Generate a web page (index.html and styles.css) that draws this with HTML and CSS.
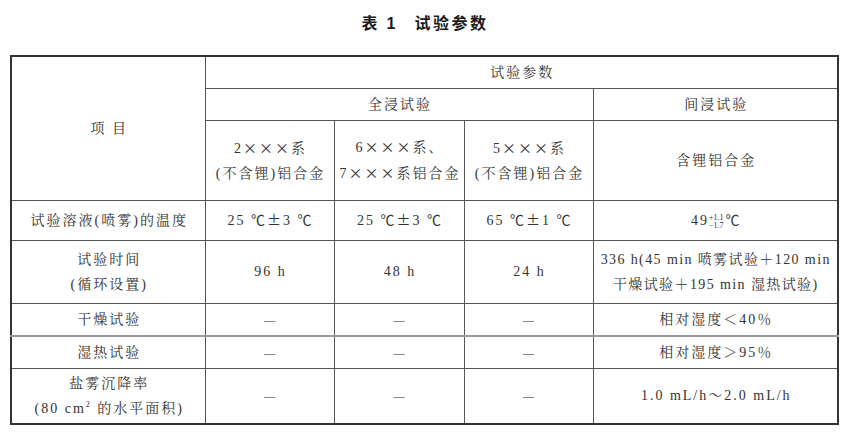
FILE: index.html
```html
<!DOCTYPE html>
<html lang="zh-CN">
<head>
<meta charset="utf-8">
<title>表 1 试验参数</title>
<link rel="stylesheet" href="styles.css">
</head>
<body>
<div class="title"><span>表</span><span class="num">1</span><span class="name">试验参数</span></div>
<table class="params">
  <colgroup>
    <col class="c1"><col class="c2"><col class="c3"><col class="c4"><col class="c5">
  </colgroup>
  <tr class="r1">
    <td rowspan="3">项 目</td>
    <td colspan="4">试验参数</td>
  </tr>
  <tr class="r2">
    <td colspan="3">全浸试验</td>
    <td>间浸试验</td>
  </tr>
  <tr class="r3">
    <td>2<span class="u">×</span><span class="u">×</span><span class="u">×</span>系<br>(不含锂)铝合金</td>
    <td>6<span class="u">×</span><span class="u">×</span><span class="u">×</span>系、<br>7<span class="u">×</span><span class="u">×</span><span class="u">×</span>系铝合金</td>
    <td>5<span class="u">×</span><span class="u">×</span><span class="u">×</span>系<br>(不含锂)铝合金</td>
    <td>含锂铝合金</td>
  </tr>
  <tr class="r4">
    <td>试验溶液(喷雾)的温度</td>
    <td>25 <span class="u">℃</span><span class="u">±</span>3 <span class="u">℃</span></td>
    <td>25 <span class="u">℃</span><span class="u">±</span>3 <span class="u">℃</span></td>
    <td>65 <span class="u">℃</span><span class="u">±</span>1 <span class="u">℃</span></td>
    <td>49<span class="tol"><span>+1.1</span><span>−1.7</span></span><span class="u">℃</span></td>
  </tr>
  <tr class="r5">
    <td>试验时间<br>(循环设置)</td>
    <td>96 h</td>
    <td>48 h</td>
    <td>24 h</td>
    <td class="tight">336 h(45 min 喷雾试验＋120 min<br>干燥试验＋195 min 湿热试验)</td>
  </tr>
  <tr class="r6">
    <td>干燥试验</td>
    <td class="dash">—</td>
    <td class="dash">—</td>
    <td class="dash">—</td>
    <td>相对湿度＜40％</td>
  </tr>
  <tr class="r7">
    <td>湿热试验</td>
    <td class="dash">—</td>
    <td class="dash">—</td>
    <td class="dash">—</td>
    <td>相对湿度＞95％</td>
  </tr>
  <tr class="r8">
    <td>盐雾沉降率<br>(80 cm<sup>2</sup> 的水平面积)</td>
    <td class="dash">—</td>
    <td class="dash">—</td>
    <td class="dash">—</td>
    <td>1.0 mL/h～2.0 mL/h</td>
  </tr>
</table>
</body>
</html>
```

FILE: styles.css
```css
html, body {
  margin: 0;
  padding: 0;
  background: #ffffff;
}

body {
  width: 848px;
  height: 434px;
  color: #333333;
  font-family: "Liberation Serif", "Noto Serif CJK SC", "Noto Sans CJK SC", serif;
}

.title {
  height: 55px;
  box-sizing: border-box;
  padding-top: 12px;
  padding-left: 2px;
  text-align: center;
  font-family: "Noto Sans CJK SC", sans-serif;
  font-weight: 700;
  font-size: 16px;
  line-height: 21px;
  color: #1a1a1a;
}

.title .num {
  margin-left: 9px;
  font-family: "Liberation Sans", sans-serif;
}

.title .name {
  margin-left: 19px;
  letter-spacing: 2.5px;
}

.params {
  margin-left: 10px;
  width: 827px;
  table-layout: fixed;
  border-collapse: collapse;
  border: 2px solid #333333;
  font-size: 14px;
  line-height: 25px;
}

.c1 { width: 194px; }
.c2 { width: 129px; }
.c3 { width: 130px; }
.c4 { width: 129px; }
.c5 { width: 245px; }

.params td {
  border: 1px solid #555555;
  padding: 0 0 0 2px;
  text-align: center;
  vertical-align: middle;
  white-space: nowrap;
  letter-spacing: 2px;
}

.params td.tight {
  letter-spacing: 1.4px;
  padding-left: 1px;
}

.r1 { height: 32px; }
.r2 { height: 32px; }
.r3 { height: 80px; }
.r4 { height: 40px; }
.r5 { height: 63px; }
.r6 { height: 33px; }
.r7 { height: 32px; }
.r8 { height: 56px; }

.params .r7 td {
  border-top: 2px solid #9a9a9a;
}

.u {
  display: inline-block;
  width: 14px;
  margin-right: 2px;
  text-align: center;
  letter-spacing: 0;
  font-family: "Noto Sans CJK SC", sans-serif;
  font-weight: 400;
}

.dash {
  color: #888888;
  font-family: "Noto Sans CJK SC", sans-serif;
}

.tol {
  display: inline-flex;
  flex-direction: column;
  vertical-align: middle;
  font-size: 8px;
  line-height: 8px;
  letter-spacing: 0;
  margin: 0 2px 0 0;
  text-align: left;
}

sup {
  font-size: 8px;
  line-height: 0;
  vertical-align: 6px;
}
```
